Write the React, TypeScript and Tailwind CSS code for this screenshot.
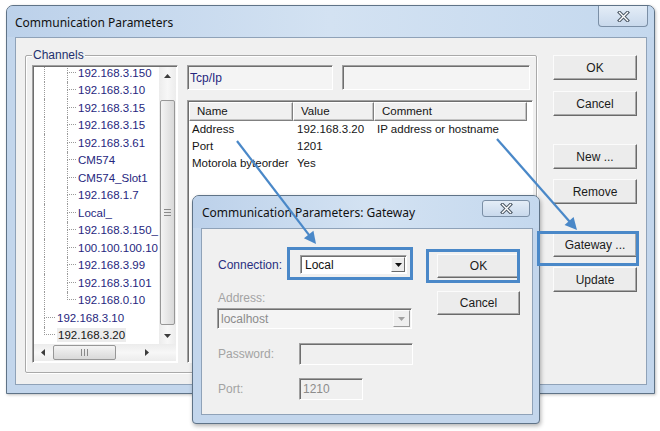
import React from 'react';

type TreeItem = { label: string; level: 0 | 1; last?: boolean; selected?: boolean };

const treeItems: TreeItem[] = [
  { label: '192.168.3.150', level: 1 },
  { label: '192.168.3.10', level: 1 },
  { label: '192.168.3.15', level: 1 },
  { label: '192.168.3.15', level: 1 },
  { label: '192.168.3.61', level: 1 },
  { label: 'CM574', level: 1 },
  { label: 'CM574_Slot1', level: 1 },
  { label: '192.168.1.7', level: 1 },
  { label: 'Local_', level: 1 },
  { label: '192.168.3.150_', level: 1 },
  { label: '100.100.100.10', level: 1 },
  { label: '192.168.3.99', level: 1 },
  { label: '192.168.3.101', level: 1 },
  { label: '192.168.0.10', level: 1, last: true },
  { label: '192.168.3.10', level: 0 },
  { label: '192.168.3.20', level: 0, last: true, selected: true },
];

const rows = [
  { name: 'Address', value: '192.168.3.20', comment: 'IP address or hostname' },
  { name: 'Port', value: '1201', comment: '' },
  { name: 'Motorola byteorder', value: 'Yes', comment: '' },
];

const sunken =
  'border border-t-[#a0a0a0] border-l-[#a0a0a0] border-r-white border-b-white shadow-[inset_1px_1px_0_#6e6e6e]';

function Tri({ dir, color = '#3c3c3c' }: { dir: 'up' | 'down' | 'left' | 'right'; color?: string }) {
  const pts = {
    up: '0,4 7,4 3.5,0',
    down: '0,0 7,0 3.5,4',
    left: '4,0 4,7 0,3.5',
    right: '0,0 0,7 4,3.5',
  }[dir];
  const vertical = dir === 'up' || dir === 'down';
  return (
    <svg width={vertical ? 7 : 4} height={vertical ? 4 : 7} viewBox={vertical ? '0 0 7 4' : '0 0 4 7'}>
      <polygon points={pts} fill={color} />
    </svg>
  );
}

function CloseGlyph() {
  return (
    <svg width="13" height="11" viewBox="0 0 13 11">
      <path d="M2.5 1.5 L10.5 9.5 M10.5 1.5 L2.5 9.5" stroke="#4d5966" strokeWidth="3.4" strokeLinecap="square" />
      <path d="M2.5 1.5 L10.5 9.5 M10.5 1.5 L2.5 9.5" stroke="#ffffff" strokeWidth="1.3" strokeLinecap="square" />
    </svg>
  );
}

function Button({ label, className = '' }: { label: string; className?: string }) {
  return (
    <div
      className={`flex items-center justify-center border border-t-[#fbfbfb] border-l-[#fbfbfb] border-r-[#6a6a6a] border-b-[#6a6a6a] bg-[#ececec] text-[12px] text-[#1b1b1b] shadow-[inset_-1px_-1px_0_#a9a9a9] ${className}`}
    >
      {label}
    </div>
  );
}

function Connector({ width, last }: { width: string; last?: boolean }) {
  return (
    <div className={`flex shrink-0 flex-col ${width}`}>
      <div className="h-1/2 border-b border-l border-dotted border-[#9a9a9a]" />
      <div className={`flex-1 ${last ? '' : 'border-l border-dotted border-[#9a9a9a]'}`} />
    </div>
  );
}

function TreeRow({ item }: { item: TreeItem }) {
  return (
    <div className="flex h-[17.5px] items-stretch">
      <div className="w-[10px] shrink-0" />
      {item.level === 1 ? (
        <>
          <div className="w-[23px] shrink-0 border-l border-dotted border-[#9a9a9a]" />
          <Connector width="w-[9px]" last={item.last} />
        </>
      ) : (
        <Connector width="w-[11px]" last={item.last} />
      )}
      <div className="flex items-center">
        <span
          className={`ml-[2px] whitespace-nowrap text-[11.5px] leading-[14px] ${
            item.selected ? 'bg-[#ececec] px-[1px] text-[#151515]' : 'text-[#26267e]'
          }`}
        >
          {item.label}
        </span>
      </div>
    </div>
  );
}

function TreeList() {
  return (
    <div className={`flex h-[298px] w-[146px] shrink-0 flex-col bg-white p-[1px] ${sunken}`}>
      <div className="flex min-h-0 flex-1">
        <div className="min-w-0 flex-1 overflow-hidden">
          <div className="-mt-[3px]">
            {treeItems.map((item, i) => (
              <TreeRow key={i} item={item} />
            ))}
          </div>
        </div>
        {/* vertical scrollbar */}
        <div className="flex w-[17px] shrink-0 flex-col bg-gradient-to-r from-[#ececec] via-[#f7f7f7] to-[#ececec]">
          <div className="flex h-[17px] items-center justify-center">
            <Tri dir="up" />
          </div>
          <div className="mx-[1px] mt-[16px] flex h-[225px] items-center justify-center rounded-[2px] border border-[#979797] bg-gradient-to-r from-[#f4f4f4] to-[#d9d9d9]">
            <div className="flex w-[7px] flex-col gap-[2px]">
              <div className="h-px bg-[#8a8a8a]" />
              <div className="h-px bg-[#8a8a8a]" />
              <div className="h-px bg-[#8a8a8a]" />
            </div>
          </div>
          <div className="flex-1" />
          <div className="flex h-[17px] items-center justify-center">
            <Tri dir="down" />
          </div>
        </div>
      </div>
      {/* horizontal scrollbar */}
      <div className="flex h-[17px] shrink-0 items-center bg-gradient-to-b from-[#ececec] via-[#f7f7f7] to-[#ececec]">
        <div className="flex w-[17px] justify-center">
          <Tri dir="left" />
        </div>
        <div className="ml-[2px] flex h-[15px] w-[63px] items-center justify-center gap-[2px] rounded-[2px] border border-[#979797] bg-gradient-to-b from-[#f4f4f4] to-[#d9d9d9]">
          <div className="h-[7px] w-px bg-[#8a8a8a]" />
          <div className="h-[7px] w-px bg-[#8a8a8a]" />
          <div className="h-[7px] w-px bg-[#8a8a8a]" />
        </div>
        <div className="flex-1" />
        <div className="flex w-[17px] justify-center">
          <Tri dir="right" />
        </div>
        <div className="w-[21px]" />
      </div>
    </div>
  );
}

function HeaderCell({ label, width }: { label: string; width: string }) {
  return (
    <div
      className={`flex h-full shrink-0 items-center border border-t-white border-l-white border-r-[#808080] border-b-[#808080] bg-[#f0f0f0] pl-[7px] shadow-[inset_-1px_-1px_0_#c4c4c4] ${width}`}
    >
      {label}
    </div>
  );
}

function PropertyTable() {
  return (
    <div className={`mt-[10px] flex h-[263px] flex-col bg-white p-[1px] text-[11.5px] text-[#151515] ${sunken}`}>
      <div className="flex h-[19px] shrink-0">
        <HeaderCell label="Name" width="w-[104px]" />
        <HeaderCell label="Value" width="w-[81px]" />
        <HeaderCell label="Comment" width="w-[153px]" />
      </div>
      {rows.map((r) => (
        <div key={r.name} className="flex h-[17px] items-center whitespace-nowrap">
          <div className="w-[104px] shrink-0 overflow-hidden pl-[3px]">{r.name}</div>
          <div className="w-[81px] shrink-0 pl-[4px]">{r.value}</div>
          <div className="pl-[3px]">{r.comment}</div>
        </div>
      ))}
    </div>
  );
}

function MainWindow() {
  return (
    <div className="flex h-[389px] w-[649px] flex-col rounded-t-[7px] border border-[#5f7387] bg-[#c3d6ec] shadow-[1px_1px_3px_rgba(0,0,0,0.25)]">
      <div className="flex h-[31px] shrink-0 rounded-t-[6px] bg-gradient-to-r from-[#bcd1ea] via-[#d3e2f2] to-[#c4d8ee]">
        <span className="ml-[8px] mt-[8px] font-['Noto_Sans',sans-serif] text-[12px] leading-[18px] text-[#111]">
          Communication Parameters
        </span>
        <div className="ml-auto mr-[6px] flex h-[21px] w-[50px] items-center justify-center rounded-b-[4px] border border-t-0 border-[#7b8fa6] bg-gradient-to-b from-[#e4edf7] to-[#c9d9ec]">
          <CloseGlyph />
        </div>
      </div>
      <div className="mb-[8px] ml-[8px] mr-[7px] flex flex-1 border border-[#8fa2b8] bg-[#f0f0f0] pl-[9px]">
        {/* Channels group */}
        <div className="relative mt-[17px] h-[318px] w-[512px] shrink-0 rounded-[2px] border border-[#a9a9a9] shadow-[inset_1px_1px_0_#ffffff,1px_1px_0_#ffffff]">
          <span className="absolute -top-[8px] left-[6px] bg-[#f0f0f0] px-[1px] text-[12px] leading-[14px] text-[#23306e]">
            Channels
          </span>
          <div className="flex pl-[6px] pt-[9px]">
            <TreeList />
            <div className="ml-[9px] flex w-[346px] flex-col">
              <div className="flex h-[25px]">
                <div className={`flex w-[146px] items-center bg-[#f4f4f4] pl-[2px] text-[12px] text-[#26267e] ${sunken}`}>
                  Tcp/Ip
                </div>
                <div className={`ml-[9px] w-[188px] bg-[#f4f4f4] ${sunken}`} />
              </div>
              <PropertyTable />
            </div>
          </div>
        </div>
        {/* Buttons */}
        <div className="ml-[16px] flex w-[84px] flex-col pt-[17px]">
          <Button label="OK" className="h-[25px]" />
          <Button label="Cancel" className="mt-[11px] h-[25px]" />
          <Button label="New ..." className="mt-[28px] h-[25px]" />
          <Button label="Remove" className="mt-[10px] h-[25px]" />
          <Button label="Gateway ..." className="mt-[28px] h-[25px]" />
          <Button label="Update" className="mt-[10px] h-[25px]" />
        </div>
      </div>
    </div>
  );
}

function GatewayDialog() {
  const label = 'text-[12px] text-[#a3a3a3]';
  return (
    <div className="absolute left-[192px] top-[195px] flex h-[229px] w-[348px] flex-col rounded-t-[7px] rounded-b-[4px] border border-[#5f7387] bg-[#c3d6ec] shadow-[1px_2px_4px_rgba(0,0,0,0.3)]">
      <div className="flex h-[32px] shrink-0 rounded-t-[6px] bg-gradient-to-r from-[#bcd1ea] via-[#d3e2f2] to-[#c4d8ee]">
        <span className="ml-[9px] mt-[8px] font-['Noto_Sans',sans-serif] text-[12px] leading-[18px] text-[#111]">
          Communication Parameters: Gateway
        </span>
        <div className="ml-auto mr-[9px] mt-[4px] flex h-[17px] w-[48px] items-center justify-center rounded-[3px] border border-[#7b8fa6] bg-gradient-to-b from-[#e4edf7] to-[#c9d9ec]">
          <CloseGlyph />
        </div>
      </div>
      <div className="mb-[8px] ml-[8px] mr-[6px] flex flex-1 border border-[#8fa2b8] bg-[#f0f0f0]">
        <div className="flex w-[211px] flex-col pl-[15px] pt-[26px]">
          <div className="flex h-[19px] items-center">
            <span className="w-[83px] shrink-0 pl-[1px] text-[12px] text-[#2a2f80]">Connection:</span>
            <div className={`flex h-full w-[107px] bg-white p-[1px] ${sunken}`}>
              <span className="flex flex-1 items-center pl-[3px] text-[12px] text-[#111]">Local</span>
              <div className="flex w-[14px] items-center justify-center border border-t-[#fbfbfb] border-l-[#fbfbfb] border-r-[#6a6a6a] border-b-[#6a6a6a] bg-[#ececec]">
                <Tri dir="down" color="#111" />
              </div>
            </div>
          </div>
          <span className={`mt-[17px] pl-[1px] leading-[14px] ${label}`}>Address:</span>
          <div className={`mt-[3px] flex h-[21px] w-[195px] bg-[#f4f4f4] p-[1px] ${sunken}`}>
            <span className="flex flex-1 items-center pl-[2px] text-[12px] text-[#8c8c8c]">localhost</span>
            <div className="flex w-[17px] items-center justify-center border border-t-[#fbfbfb] border-l-[#fbfbfb] border-r-[#9a9a9a] border-b-[#9a9a9a] bg-[#efefef]">
              <Tri dir="down" color="#a0a0a0" />
            </div>
          </div>
          <div className="mt-[14px] flex h-[22px] items-center">
            <span className={`w-[82px] shrink-0 pl-[1px] ${label}`}>Password:</span>
            <div className={`h-full w-[114px] bg-[#f0f0f0] ${sunken}`} />
          </div>
          <div className="mt-[13px] flex h-[22px] items-center">
            <span className={`w-[82px] shrink-0 pl-[1px] ${label}`}>Port:</span>
            <div className={`flex h-full w-[64px] items-center bg-[#f0f0f0] pl-[3px] text-[12px] text-[#8c8c8c] ${sunken}`}>
              1210
            </div>
          </div>
        </div>
        <div className="ml-auto mr-[12px] flex w-[83px] flex-col pt-[25px]">
          <Button label="OK" className="h-[24px]" />
          <Button label="Cancel" className="mt-[13px] h-[24px]" />
        </div>
      </div>
    </div>
  );
}

function arrow(x1: number, y1: number, x2: number, y2: number, len = 12, half = 6) {
  const dx = x2 - x1;
  const dy = y2 - y1;
  const d = Math.hypot(dx, dy);
  const ux = dx / d;
  const uy = dy / d;
  const bx = x2 - ux * len;
  const by = y2 - uy * len;
  return {
    line: { x1, y1, x2: bx + ux * 2, y2: by + uy * 2 },
    head: `${x2},${y2} ${bx - uy * half},${by + ux * half} ${bx + uy * half},${by - ux * half}`,
  };
}

function Annotations() {
  const blue = '#4a88c8';
  const a1 = arrow(237, 141, 316, 244);
  const a2 = arrow(497, 139, 577, 230);
  return (
    <svg className="pointer-events-none absolute inset-0" width="660" height="431" viewBox="0 0 660 431">
      <rect x="288.5" y="248.5" width="123" height="30" fill="none" stroke={blue} strokeWidth="3" />
      <rect x="427.5" y="250.5" width="91" height="31" fill="none" stroke={blue} strokeWidth="3" />
      <rect x="538.5" y="232.5" width="99" height="32" fill="none" stroke={blue} strokeWidth="3" />
      {[a1, a2].map((a, i) => (
        <g key={i}>
          <line {...a.line} stroke={blue} strokeWidth="2.2" />
          <polygon points={a.head} fill={blue} />
        </g>
      ))}
    </svg>
  );
}

export default function App() {
  return (
    <div className="relative h-[431px] w-[660px] overflow-hidden bg-white font-['Liberation_Sans',Arial,sans-serif]">
      <div className="pl-[6px] pt-[5px]">
        <MainWindow />
      </div>
      <GatewayDialog />
      <Annotations />
    </div>
  );
}
